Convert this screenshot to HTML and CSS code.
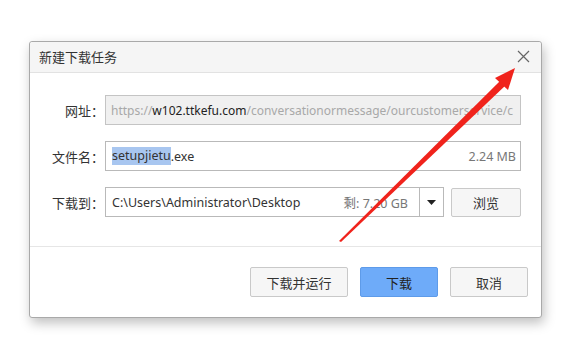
FILE: index.html
```html
<!DOCTYPE html>
<html lang="zh-CN">
<head>
<meta charset="utf-8">
<title>新建下载任务</title>
<link rel="stylesheet" href="styles.css">
</head>
<body>
<div class="dialog">
  <div class="titlebar">
    <span class="title">新建下载任务</span>
    <span class="close">
      <svg width="13" height="13" viewBox="0 0 13 13"><path d="M1 1 L12 12 M12 1 L1 12" stroke="#666" stroke-width="1.2" fill="none"/></svg>
    </span>
  </div>
  <div class="form">
    <label class="label">网址：</label>
    <div class="field url"><span class="dim">https://</span><span class="host">w102.ttkefu.com</span><span class="dim">/conversationormessage/ourcustomerservice/c</span></div>

    <label class="label">文件名：</label>
    <div class="field name"><span class="sel">setupjietu</span>.exe<span class="size">2.24 MB</span></div>

    <label class="label">下载到：</label>
    <div class="dest-row">
      <div class="field dest">
        <span class="path">C:\Users\Administrator\Desktop</span>
        <span class="free">剩: 7.20 GB</span>
        <span class="drop"><svg width="9" height="5" viewBox="0 0 9 5"><path d="M0 0 H9 L4.5 5 Z" fill="#222"/></svg></span>
      </div>
      <button class="btn browse">浏览</button>
    </div>
  </div>
  <div class="footer">
    <button class="btn">下载并运行</button>
    <button class="btn primary">下载</button>
    <button class="btn">取消</button>
  </div>
</div>
<svg class="arrow" width="569" height="338" viewBox="0 0 569 338">
  <polygon points="339,241 341,242 507,84 502,79" fill="#f0231c"/>
  <polygon points="515,68 495,78 508,90" fill="#f0231c"/>
</svg>
</body>
</html>
```
FILE: styles.css
```css
html, body {
  margin: 0;
  padding: 0;
  background: #fff;
}
body {
  font-family: "Noto Sans", "Noto Sans CJK SC", sans-serif;
  font-size: 13px;
  color: #333;
  width: 569px;
  height: 338px;
  overflow: hidden;
}
.dialog {
  box-sizing: border-box;
  width: 513px;
  height: 277px;
  margin: 41px 0 0 29px;
  border: 1px solid #a9a9a9;
  border-radius: 3px;
  background: #fff;
  box-shadow: 2px 5px 12px rgba(0,0,0,0.25);
  display: flex;
  flex-direction: column;
}
.titlebar {
  height: 30px;
  background: #f5f5f5;
  border-bottom: 1px solid #e2e2e2;
  border-radius: 3px 3px 0 0;
  display: flex;
  align-items: center;
  justify-content: space-between;
  padding: 0 11px 2px 9px;
  box-sizing: content-box;
  height: 28px;
}
.title {
  font-size: 13px;
  color: #333;
}
.close {
  display: flex;
}
.form {
  display: grid;
  grid-template-columns: 74px 416px;
  column-gap: 1px;
  row-gap: 16px;
  padding: 22px 0 29px 0;
  border-bottom: 1px solid #e6e6e6;
  align-items: center;
}
.label {
  text-align: right;
  color: #333;
  white-space: nowrap;
}
.field {
  box-sizing: border-box;
  height: 30px;
  border: 1px solid #b9b9b9;
  display: flex;
  align-items: center;
  padding: 0 4px 0 6px;
  white-space: nowrap;
  overflow: hidden;
  color: #333;
  font-size: 12.5px;
}
.url {
  background: #f0f0f0;
  border-color: #c4c4c4;
  font-size: 12px;
  padding-left: 5px;
}
.dim { color: #a8a8a8; }
.host { color: #222; }
.sel {
  background: #a8c6f0;
  line-height: 18px;
}
.size {
  margin-left: auto;
  color: #777;
}
.dest-row {
  display: flex;
  gap: 7px;
  align-items: center;
}
.dest {
  width: 339px;
  padding-right: 0;
}
.path { color: #333; }
.free {
  margin-left: auto;
  color: #777;
  padding-right: 11px;
}
.drop {
  width: 23px;
  height: 28px;
  border-left: 1px solid #b9b9b9;
  display: flex;
  align-items: center;
  justify-content: center;
}
.btn {
  box-sizing: border-box;
  height: 30px;
  width: 78px;
  border: 1px solid #c9c9c9;
  border-radius: 2px;
  background: #f6f6f6;
  font-family: "Noto Sans", "Noto Sans CJK SC", sans-serif;
  font-size: 13px;
  color: #333;
  padding: 0;
}
.browse {
  width: 70px;
  height: 29px;
}
.footer {
  display: flex;
  justify-content: flex-end;
  gap: 12px;
  padding: 20px 13px 20px 0;
}
.footer .btn:first-child {
  width: 98px;
}
.primary {
  background: #6eabf9;
  border-color: #5e9be9;
  color: #222;
}
.arrow {
  position: absolute;
  left: 0;
  top: 0;
  pointer-events: none;
}
```
